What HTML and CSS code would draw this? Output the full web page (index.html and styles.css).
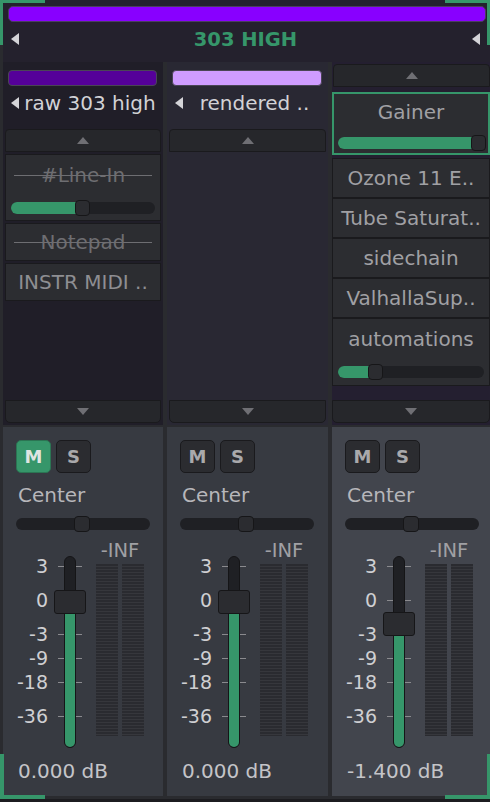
FILE: index.html
```html
<!DOCTYPE html>
<html lang="en">
<head>
    <meta charset="UTF-8">
    <meta name="viewport" content="width=device-width, initial-scale=1.0">
    <title>303 HIGH - Mixer</title>
    <link rel="stylesheet" href="styles.css">
</head>
<body>
<div class="app">
    <div class="header">
        <div class="title-bar"></div>
        <div class="title-row">
            <span class="tri-left"></span>
            <span class="title">303 HIGH</span>
            <span class="tri-left"></span>
        </div>
    </div>

    <div class="channels">
        <!-- channel 1 -->
        <div class="channel">
            <div class="rack rack-a">
                <div class="color-bar bar-dark"></div>
                <div class="name-row">
                    <span class="tri-left"></span>
                    <span class="ch-name">raw 303 high</span>
                </div>
                <div class="arrow-btn up"><span class="tri-up"></span></div>
                <div class="slots">
                    <div class="slot param off">
                        <div class="slot-label">#Line-In</div>
                        <div class="mini-slider"><div class="fill" style="width: 70px"></div><div class="grip" style="left: 64px"></div></div>
                    </div>
                    <div class="slot off"><div class="slot-label">Notepad</div></div>
                    <div class="slot dim"><div class="slot-label">INSTR MIDI ..</div></div>
                </div>
                <div class="arrow-btn down"><span class="tri-down"></span></div>
            </div>
            <div class="strip">
                <div class="ms">
                    <div class="btn on">M</div>
                    <div class="btn">S</div>
                </div>
                <div class="pan-label">Center</div>
                <div class="pan"><div class="grip" style="left: 58px"></div></div>
                <div class="fader-row">
                    <div class="fader">
                        <span class="scale" style="top: 21px">3</span>
                        <span class="scale" style="top: 55px">0</span>
                        <span class="scale" style="top: 89px">-3</span>
                        <span class="scale" style="top: 113px">-9</span>
                        <span class="scale" style="top: 137px">-18</span>
                        <span class="scale" style="top: 171px">-36</span>
                        <span class="tick" style="top: 31px"></span>
                        <span class="tick" style="top: 65px"></span>
                        <span class="tick" style="top: 99px"></span>
                        <span class="tick" style="top: 123px"></span>
                        <span class="tick" style="top: 147px"></span>
                        <span class="tick" style="top: 181px"></span>
                        <div class="track"><div class="track-fill" style="top: 46px"></div></div>
                        <div class="handle" style="top: 55px"></div>
                    </div>
                    <div class="meter-col">
                        <div class="peak">-INF</div>
                        <div class="meters"><div class="meter"></div><div class="meter"></div></div>
                    </div>
                </div>
                <div class="gain">0.000 dB</div>
            </div>
        </div>

        <!-- channel 2 -->
        <div class="channel">
            <div class="rack rack-b">
                <div class="color-bar bar-light"></div>
                <div class="name-row">
                    <span class="tri-left"></span>
                    <span class="ch-name">rendered ..</span>
                </div>
                <div class="arrow-btn up"><span class="tri-up"></span></div>
                <div class="slots"></div>
                <div class="arrow-btn down"><span class="tri-down"></span></div>
            </div>
            <div class="strip">
                <div class="ms">
                    <div class="btn">M</div>
                    <div class="btn">S</div>
                </div>
                <div class="pan-label">Center</div>
                <div class="pan"><div class="grip" style="left: 58px"></div></div>
                <div class="fader-row">
                    <div class="fader">
                        <span class="scale" style="top: 21px">3</span>
                        <span class="scale" style="top: 55px">0</span>
                        <span class="scale" style="top: 89px">-3</span>
                        <span class="scale" style="top: 113px">-9</span>
                        <span class="scale" style="top: 137px">-18</span>
                        <span class="scale" style="top: 171px">-36</span>
                        <span class="tick" style="top: 31px"></span>
                        <span class="tick" style="top: 65px"></span>
                        <span class="tick" style="top: 99px"></span>
                        <span class="tick" style="top: 123px"></span>
                        <span class="tick" style="top: 147px"></span>
                        <span class="tick" style="top: 181px"></span>
                        <div class="track"><div class="track-fill" style="top: 46px"></div></div>
                        <div class="handle" style="top: 55px"></div>
                    </div>
                    <div class="meter-col">
                        <div class="peak">-INF</div>
                        <div class="meters"><div class="meter"></div><div class="meter"></div></div>
                    </div>
                </div>
                <div class="gain">0.000 dB</div>
            </div>
        </div>

        <!-- channel 3 -->
        <div class="channel">
            <div class="rack rack-c">
                <div class="arrow-btn up"><span class="tri-up"></span></div>
                <div class="slots">
                    <div class="slot param active">
                        <div class="slot-label">Gainer</div>
                        <div class="mini-slider"><div class="fill" style="width: 140px"></div><div class="grip" style="left: 133px"></div></div>
                    </div>
                    <div class="slot"><div class="slot-label">Ozone 11 E..</div></div>
                    <div class="slot"><div class="slot-label">Tube Saturat..</div></div>
                    <div class="slot"><div class="slot-label">sidechain</div></div>
                    <div class="slot"><div class="slot-label">ValhallaSup..</div></div>
                    <div class="slot param">
                        <div class="slot-label">automations</div>
                        <div class="mini-slider"><div class="fill" style="width: 36px"></div><div class="grip" style="left: 30px"></div></div>
                    </div>
                </div>
                <div class="arrow-btn down"><span class="tri-down"></span></div>
            </div>
            <div class="strip selected">
                <div class="ms">
                    <div class="btn">M</div>
                    <div class="btn">S</div>
                </div>
                <div class="pan-label">Center</div>
                <div class="pan"><div class="grip" style="left: 58px"></div></div>
                <div class="fader-row">
                    <div class="fader">
                        <span class="scale" style="top: 21px">3</span>
                        <span class="scale" style="top: 55px">0</span>
                        <span class="scale" style="top: 89px">-3</span>
                        <span class="scale" style="top: 113px">-9</span>
                        <span class="scale" style="top: 137px">-18</span>
                        <span class="scale" style="top: 171px">-36</span>
                        <span class="tick" style="top: 31px"></span>
                        <span class="tick" style="top: 65px"></span>
                        <span class="tick" style="top: 99px"></span>
                        <span class="tick" style="top: 123px"></span>
                        <span class="tick" style="top: 147px"></span>
                        <span class="tick" style="top: 181px"></span>
                        <div class="track"><div class="track-fill" style="top: 68px"></div></div>
                        <div class="handle" style="top: 77px"></div>
                    </div>
                    <div class="meter-col">
                        <div class="peak">-INF</div>
                        <div class="meters"><div class="meter"></div><div class="meter"></div></div>
                    </div>
                </div>
                <div class="gain">-1.400 dB</div>
            </div>
        </div>
    </div>

    <span class="corner tl"></span>
    <span class="corner tr"></span>
    <span class="corner bl"></span>
    <span class="corner br"></span>
</div>
</body>
</html>
```

FILE: styles.css
```css
* {
    box-sizing: border-box;
}
body {
    margin: 0;
    background-color: #1c1c20;
    font-family: "DejaVu Sans", sans-serif;
}
.app {
    position: relative;
    width: 490px;
    height: 799px;
    background: #2a2b2f;
}

/* header */
.header {
    margin-left: 3px;
    height: 62px;
    background: #24212d;
    padding: 6px 4px 0 5px;
}
.title-bar {
    height: 16px;
    background: #8800ff;
    border: 1px solid #4b3f5e;
    border-radius: 5px;
}
.title-row {
    display: flex;
    align-items: center;
    height: 24px;
    margin-top: 5px;
    padding: 0 6px 0 3px;
}
.title {
    flex: 1;
    text-align: center;
    color: #36966a;
    font-weight: bold;
    font-size: 19.5px;
}
.tri-left {
    width: 0;
    height: 0;
    border-top: 6px solid transparent;
    border-bottom: 6px solid transparent;
    border-right: 8px solid #d4d4d8;
}

/* channel columns */
.channels {
    display: grid;
    grid-template-columns: 160px 161px 158px;
    column-gap: 4px;
    padding-left: 3px;
}
.channel {
    height: 734px;
    display: flex;
    flex-direction: column;
    gap: 2px;
}
.rack {
    height: 363px;
    display: flex;
    flex-direction: column;
    padding: 0 2px 2px;
}
.rack-a {
    background: #201e28;
}
.rack-b {
    background: #292833;
}
.rack-c {
    background: #241f30;
    padding: 2px 0;
}
.rack-c .arrow-btn.up {
    margin-left: 1px;
}
.color-bar {
    height: 16px;
    margin: 8px 4px 0 3px;
    border: 1px solid #4a4555;
    border-radius: 4px;
}
.bar-dark {
    background: #550099;
}
.bar-light {
    background: #cf9cff;
}
.name-row {
    display: flex;
    align-items: center;
    height: 24px;
    margin: 5px 0 14px;
    padding-left: 6px;
}
.ch-name {
    flex: 1;
    text-align: center;
    white-space: nowrap;
    color: #d2d2d6;
    font-size: 20px;
}
.arrow-btn {
    height: 23px;
    background: #26272b;
    border: 1px solid #1a1a1d;
    display: flex;
    align-items: center;
    justify-content: center;
}
.arrow-btn.up {
    border-radius: 4px 4px 0 0;
}
.arrow-btn.down {
    border-radius: 0 0 5px 5px;
}
.tri-up {
    border-left: 6px solid transparent;
    border-right: 6px solid transparent;
    border-bottom: 7px solid #6f6f74;
}
.tri-down {
    border-left: 6px solid transparent;
    border-right: 6px solid transparent;
    border-top: 7px solid #6f6f74;
}

/* plugin slots */
.slots {
    flex: 1;
    display: flex;
    flex-direction: column;
}
.slot {
    height: 40px;
    background: #2c2d31;
    border: 1px solid #1a1a1d;
    display: flex;
    flex-direction: column;
    justify-content: center;
    color: #a0a0a4;
    font-size: 20px;
}
.slot-label {
    position: relative;
    margin: 0 8px;
    line-height: 24px;
    text-align: center;
    white-space: nowrap;
}
.slot.param {
    height: 68px;
    justify-content: flex-start;
    padding-top: 8px;
}
.slot.param .mini-slider {
    margin-top: 15px;
}
.slot.active {
    height: 63px;
    margin-top: 5px;
    border: 2px solid #36966a;
    padding-top: 6px;
}
.slot.active .mini-slider {
    margin: 13px 2px 0 4px;
}
.slot.active + .slot {
    margin-top: 3px;
}
.rack-a .slot {
    margin-top: 2px;
    height: 38px;
    color: #8e8e92;
}
.rack-a .slot.param {
    height: 67px;
}
.rack-a .slot.off {
    color: #6e6e72;
}
.slot.off .slot-label::after {
    content: "";
    position: absolute;
    left: 0;
    right: 0;
    top: 12px;
    border-top: 1px solid #6e6e72;
}
.mini-slider {
    position: relative;
    height: 12px;
    margin: 0 5px;
    background: #1f2024;
    border-radius: 6px;
}
.fill {
    height: 100%;
    background: #36966a;
    border-radius: 6px 0 0 6px;
}
.grip {
    position: absolute;
    top: -2px;
    width: 15px;
    height: 16px;
    background: #2b2c30;
    border: 1px solid #161618;
    border-radius: 4px;
}

/* mixer strip */
.strip {
    flex: 1;
    background: #373a41;
    padding: 13px 0 0 13px;
}
.strip.selected {
    background: #42454d;
}
.ms {
    display: flex;
    gap: 5px;
}
.btn {
    width: 35px;
    height: 33px;
    display: flex;
    align-items: center;
    justify-content: center;
    background: #2b2c30;
    border: 1px solid #1a1a1d;
    border-radius: 5px;
    color: #a9a9ab;
    font-weight: bold;
    font-size: 18px;
}
.btn.on {
    background: #36966a;
    border-color: #2b7553;
    color: #dfe5e1;
}
.pan-label {
    margin: 10px 0 0 2px;
    line-height: 24px;
    font-size: 20px;
    color: #b6b6ba;
}
.pan {
    position: relative;
    width: 134px;
    height: 12px;
    margin-top: 11px;
    background: #1f2024;
    border-radius: 6px;
}
.pan .grip {
    width: 16px;
}
.fader-row {
    display: flex;
    margin-top: 5px;
    height: 213px;
}
.fader {
    position: relative;
    width: 80px;
}
.scale {
    position: absolute;
    left: 0;
    width: 32px;
    text-align: right;
    line-height: 20px;
    font-size: 19px;
    color: #cfcfd2;
}
.tick {
    position: absolute;
    left: 42px;
    width: 24px;
    border-top: 1px solid #8a8a8e;
}
.track {
    position: absolute;
    left: 48px;
    top: 21px;
    width: 12px;
    height: 192px;
    background: #1f2024;
    border: 1px solid #151517;
    border-radius: 6px;
    overflow: hidden;
}
.track-fill {
    position: absolute;
    left: 0;
    right: 0;
    bottom: 0;
    background: #36966a;
}
.handle {
    position: absolute;
    left: 38px;
    width: 32px;
    height: 24px;
    background: #2b2c30;
    border: 1px solid #161618;
    border-radius: 3px;
}
.meter-col {
    width: 48px;
    display: flex;
    flex-direction: column;
}
.peak {
    margin-top: 4px;
    line-height: 24px;
    text-align: center;
    font-size: 19.5px;
    color: #a0a0a4;
}
.meters {
    display: flex;
    gap: 4px;
    margin-top: 1px;
    height: 172px;
}
.meter {
    width: 22px;
    background: repeating-linear-gradient(to bottom, #2a2b30 0, #2a2b30 2px, #36373c 2px, #36373c 3px);
}
.gain {
    margin: 11px 0 0 2px;
    line-height: 24px;
    font-size: 20px;
    color: #c4c4c8;
}

/* green corner brackets */
.corner {
    position: absolute;
    width: 45px;
    height: 45px;
    border: 0 solid #36966a;
}
.tl {
    top: 0;
    left: 0;
    border-width: 3px 0 0 3px;
}
.tr {
    top: 0;
    right: 0;
    border-width: 3px 3px 0 0;
}
.bl {
    bottom: 0;
    left: 0;
    border-width: 0 0 4px 4px;
}
.br {
    bottom: 0;
    right: 0;
    border-width: 0 3px 4px 0;
}
```
